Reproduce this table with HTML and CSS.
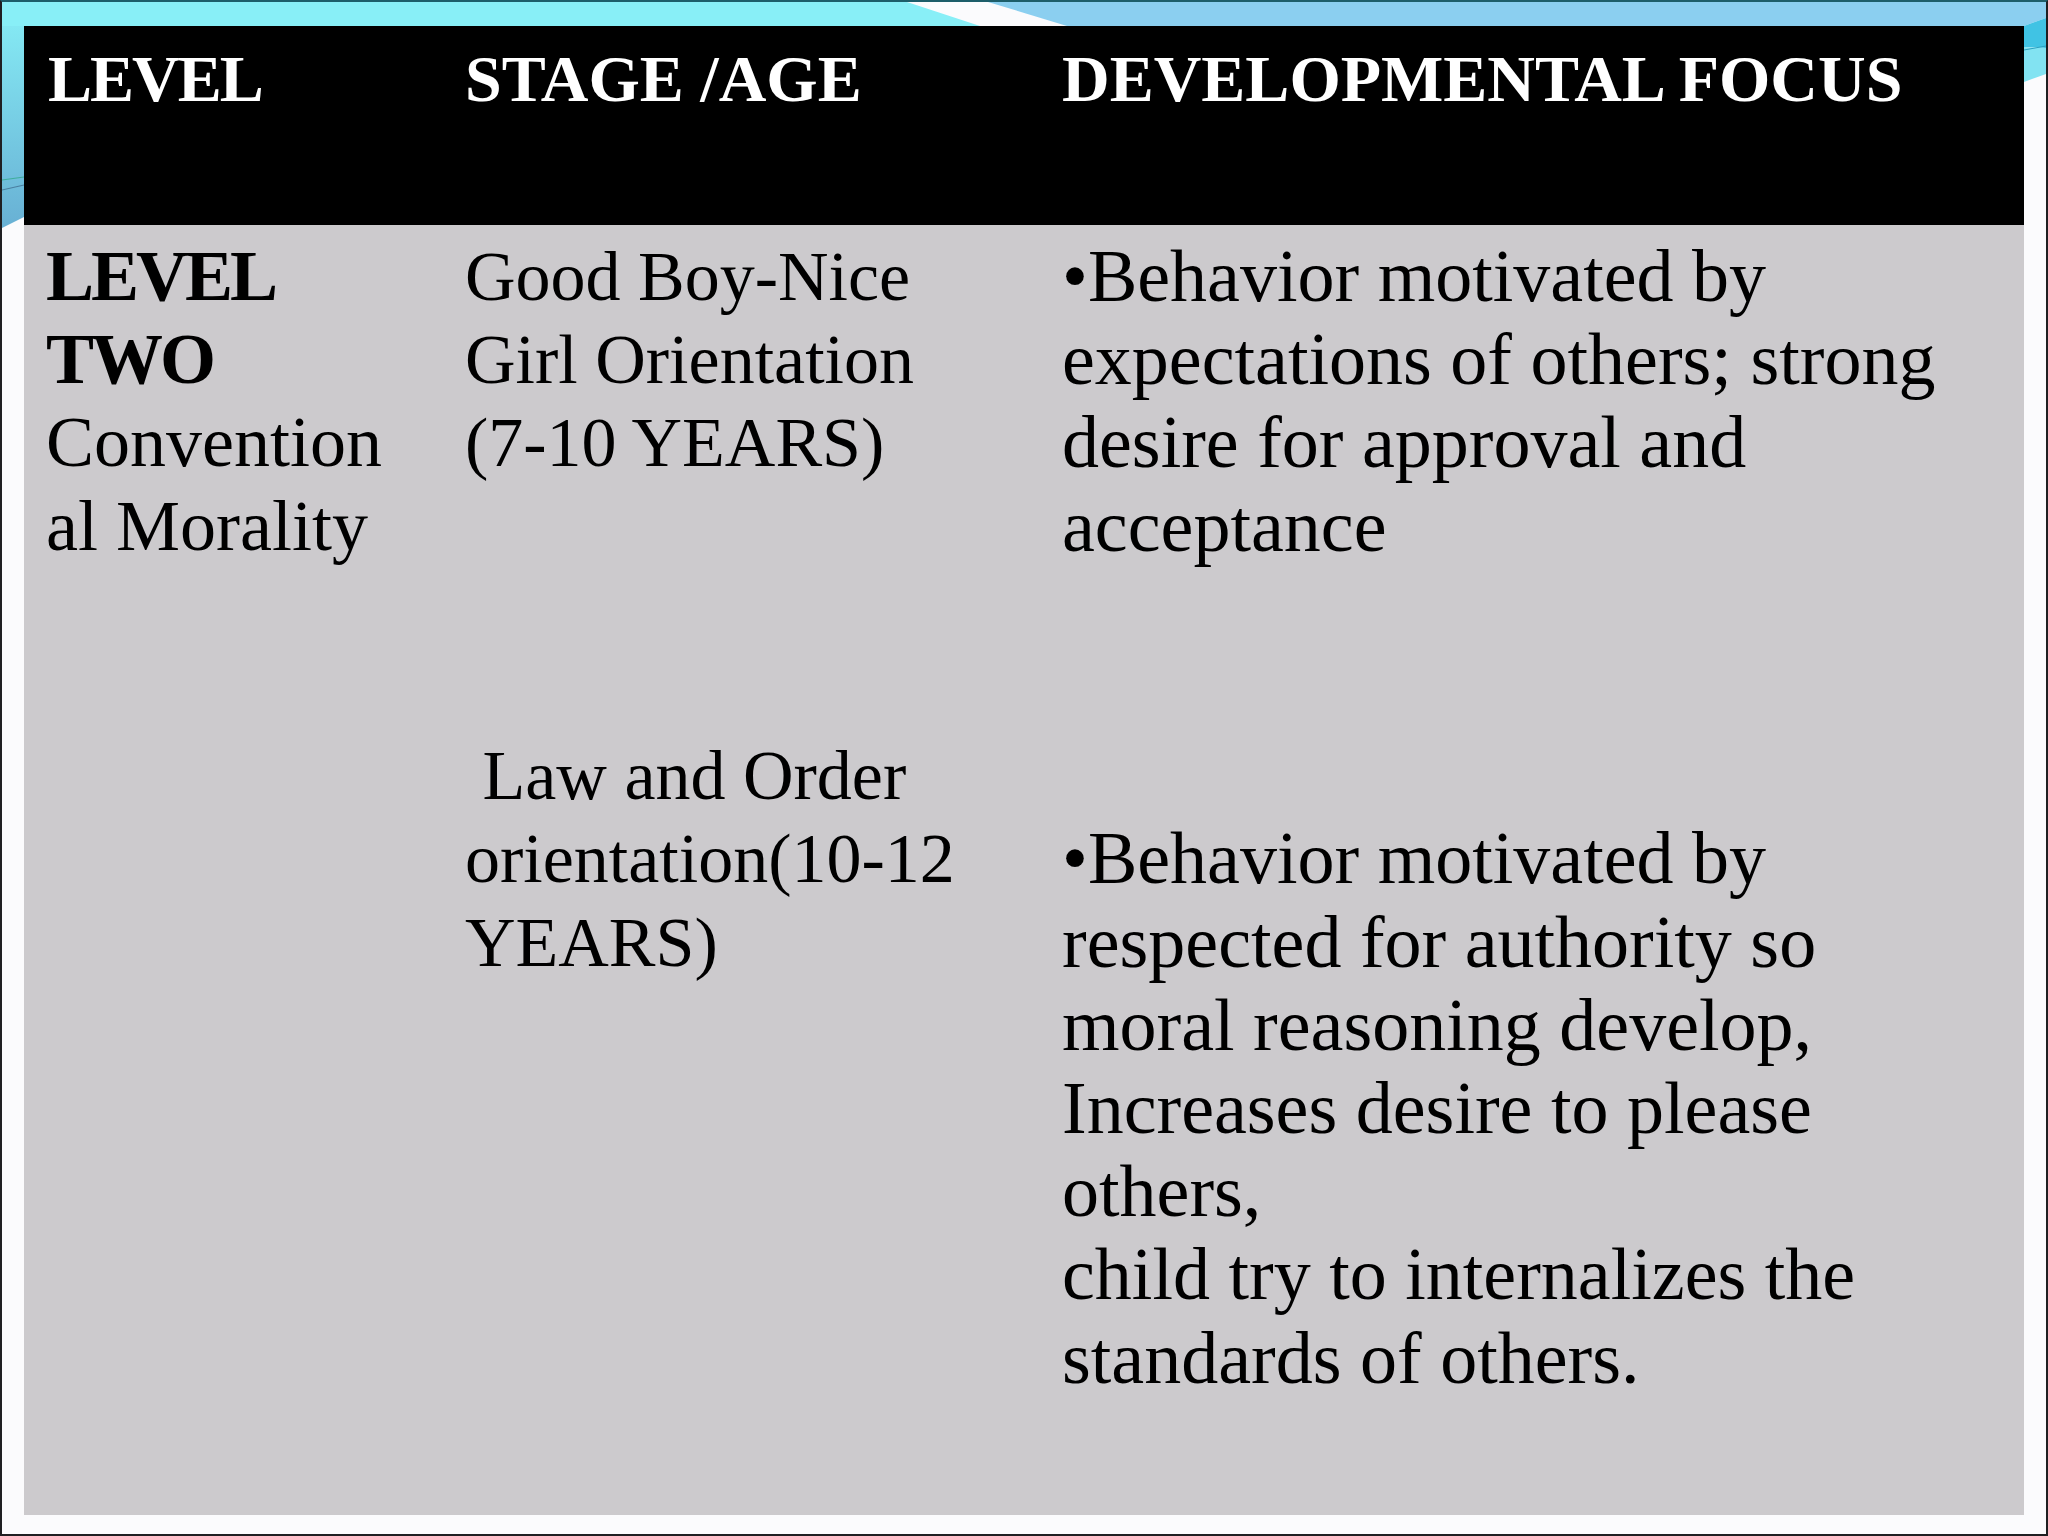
FILE: index.html
```html
<!DOCTYPE html>
<html lang="en">
<head>
<meta charset="utf-8">
<title>Level Two – Conventional Morality</title>
<link rel="stylesheet" href="styles.css">
</head>
<body>
<div class="slide">
  <svg class="deco" viewBox="2 2 2044 1532" width="2044" height="1532" aria-hidden="true">
    <defs>
      <linearGradient id="leftStrip" x1="0" y1="0" x2="0" y2="1">
        <stop offset="0" stop-color="#84e8f3"/>
        <stop offset="1" stop-color="#68b0d4"/>
      </linearGradient>
    </defs>
    <polygon points="2,2 907,2 980,26 2,26" fill="#88eff7"/>
    <polygon points="2,26 24,26 24,217 2,228" fill="url(#leftStrip)"/>
    <line x1="2" y1="180" x2="24" y2="177" stroke="#3fae9c" stroke-width="1.2"/>
    <line x1="2" y1="190" x2="24" y2="185" stroke="#4a7fa0" stroke-width="1.2"/>
    <polygon points="988,2 2046,2 2046,18 2024,26 1067,26" fill="#8bcff0"/>
    <polygon points="2024,26 2046,18 2046,48 2024,47" fill="#40c3e4"/>
    <polygon points="2024,47 2046,48 2046,74 2024,82" fill="#82e3f2"/>
    <line x1="2024" y1="50" x2="2046" y2="46" stroke="#2aa0c0" stroke-width="1"/>
  </svg>
  <div class="table">
    <div class="row head">
      <div class="cell"><span class="tight">LEVEL</span></div>
      <div class="cell">STAGE /AGE</div>
      <div class="cell">DEVELOPMENTAL FOCUS</div>
    </div>
    <div class="row body">
      <div class="cell c1">
        <p><b class="tight-bold">LEVEL<br>TWO</b><br>Convention<br>al Morality</p>
      </div>
      <div class="cell c2">
        <p>Good Boy-Nice<br>Girl Orientation<br>(7-10 YEARS)</p>
        <p class="later">&nbsp;Law and Order<br>orientation(10-12<br>YEARS)</p>
      </div>
      <div class="cell c3">
        <p>•Behavior motivated by<br>expectations of others; strong<br>desire for approval and<br>acceptance</p>
        <p class="later">•Behavior motivated by<br>respected for authority so<br>moral reasoning develop,<br>Increases desire to please<br>others,<br>child try to internalizes the<br>standards of others.</p>
      </div>
    </div>
  </div>
</div>
</body>
</html>
```
FILE: styles.css
```css
html, body {
  margin: 0;
  padding: 0;
  background: #fbfbfd;
}

.slide {
  position: relative;
  width: 2048px;
  height: 1536px;
  box-sizing: border-box;
  border: 2px solid #1f1f22;
  border-top-color: #1d5e6a;
  background: #fbfbfd;
  padding: 24px 22px 19px 22px;
  font-family: "Liberation Serif", "Times New Roman", serif;
  overflow: hidden;
}

.deco {
  position: absolute;
  top: 0;
  left: 0;
  display: block;
}

.table {
  position: relative;
  height: 100%;
  display: flex;
  flex-direction: column;
}

.row {
  display: grid;
  grid-template-columns: 417px 597px 986px;
}

.head {
  height: 199px;
  box-sizing: border-box;
  padding-top: 13px;
  background: #000;
  color: #fff;
  font-weight: bold;
  font-size: 66px;
  line-height: 80px;
}

.tight {
  letter-spacing: -2px;
}

.body {
  flex: 1;
  box-sizing: border-box;
  padding-top: 10px;
  background: #cccacd;
  color: #000;
  font-size: 72px;
  line-height: 83.2px;
}

.cell {
  padding-left: 24px;
  white-space: nowrap;
}

.c1 {
  padding-left: 22px;
}

.tight-bold {
  letter-spacing: -3px;
}

.cell p {
  margin: 0;
}

.cell p.later {
  margin-top: 249.6px;
}

.c2 {
  font-size: 70px;
}

.c3 {
  font-size: 74px;
}
```
